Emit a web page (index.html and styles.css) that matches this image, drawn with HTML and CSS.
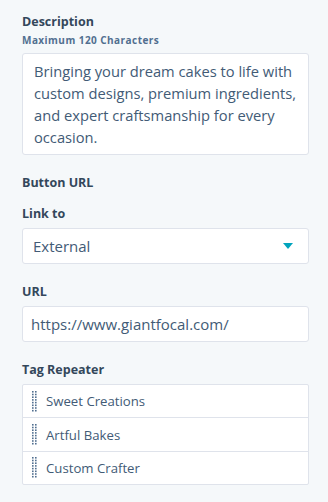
FILE: index.html
```html
<!DOCTYPE html>
<html>
<head>
<meta charset="utf-8">
<link rel="stylesheet" href="styles.css">
</head>
<body>
<div class="panel">
  <div class="field">
    <div class="label">Description</div>
    <div class="help">Maximum 120 Characters</div>
    <div class="textarea">Bringing your dream cakes to life with custom designs, premium ingredients, and expert craftsmanship for every occasion.</div>
  </div>
  <div class="group-title">Button URL</div>
  <div class="field link-field">
    <div class="label">Link to</div>
    <div class="input select">
      <span>External</span>
      <svg class="caret" width="10" height="6" viewBox="0 0 10 6"><path d="M0 0 H10 L5 6 Z" fill="#00a4bd"/></svg>
    </div>
  </div>
  <div class="field">
    <div class="label">URL</div>
    <div class="input">https://www.giantfocal.com/</div>
  </div>
  <div class="field">
    <div class="label">Tag Repeater</div>
    <div class="repeater">
      <div class="row"><svg class="handle" width="5" height="21" viewBox="0 0 5 21"><g fill="#516f90"><rect x="0" y="0" width="1.6" height="1.6"/><rect x="3" y="0" width="1.6" height="1.6"/><rect x="0" y="2.7" width="1.6" height="1.6"/><rect x="3" y="2.7" width="1.6" height="1.6"/><rect x="0" y="5.4" width="1.6" height="1.6"/><rect x="3" y="5.4" width="1.6" height="1.6"/><rect x="0" y="8.1" width="1.6" height="1.6"/><rect x="3" y="8.1" width="1.6" height="1.6"/><rect x="0" y="10.8" width="1.6" height="1.6"/><rect x="3" y="10.8" width="1.6" height="1.6"/><rect x="0" y="13.5" width="1.6" height="1.6"/><rect x="3" y="13.5" width="1.6" height="1.6"/><rect x="0" y="16.2" width="1.6" height="1.6"/><rect x="3" y="16.2" width="1.6" height="1.6"/><rect x="0" y="18.9" width="1.6" height="1.6"/><rect x="3" y="18.9" width="1.6" height="1.6"/></g></svg><span>Sweet Creations</span></div>
      <div class="row"><svg class="handle" width="5" height="21" viewBox="0 0 5 21"><g fill="#516f90"><rect x="0" y="0" width="1.6" height="1.6"/><rect x="3" y="0" width="1.6" height="1.6"/><rect x="0" y="2.7" width="1.6" height="1.6"/><rect x="3" y="2.7" width="1.6" height="1.6"/><rect x="0" y="5.4" width="1.6" height="1.6"/><rect x="3" y="5.4" width="1.6" height="1.6"/><rect x="0" y="8.1" width="1.6" height="1.6"/><rect x="3" y="8.1" width="1.6" height="1.6"/><rect x="0" y="10.8" width="1.6" height="1.6"/><rect x="3" y="10.8" width="1.6" height="1.6"/><rect x="0" y="13.5" width="1.6" height="1.6"/><rect x="3" y="13.5" width="1.6" height="1.6"/><rect x="0" y="16.2" width="1.6" height="1.6"/><rect x="3" y="16.2" width="1.6" height="1.6"/><rect x="0" y="18.9" width="1.6" height="1.6"/><rect x="3" y="18.9" width="1.6" height="1.6"/></g></svg><span>Artful Bakes</span></div>
      <div class="row"><svg class="handle" width="5" height="21" viewBox="0 0 5 21"><g fill="#516f90"><rect x="0" y="0" width="1.6" height="1.6"/><rect x="3" y="0" width="1.6" height="1.6"/><rect x="0" y="2.7" width="1.6" height="1.6"/><rect x="3" y="2.7" width="1.6" height="1.6"/><rect x="0" y="5.4" width="1.6" height="1.6"/><rect x="3" y="5.4" width="1.6" height="1.6"/><rect x="0" y="8.1" width="1.6" height="1.6"/><rect x="3" y="8.1" width="1.6" height="1.6"/><rect x="0" y="10.8" width="1.6" height="1.6"/><rect x="3" y="10.8" width="1.6" height="1.6"/><rect x="0" y="13.5" width="1.6" height="1.6"/><rect x="3" y="13.5" width="1.6" height="1.6"/><rect x="0" y="16.2" width="1.6" height="1.6"/><rect x="3" y="16.2" width="1.6" height="1.6"/><rect x="0" y="18.9" width="1.6" height="1.6"/><rect x="3" y="18.9" width="1.6" height="1.6"/></g></svg><span>Custom Crafter</span></div>
    </div>
  </div>
</div>
</body>
</html>
```
FILE: styles.css
```css
html, body {
  margin: 0;
  padding: 0;
  background: #f5f8fa;
}
body {
  font-family: "Open Sans", "Liberation Sans", sans-serif;
  color: #33475b;
  width: 328px;
  height: 502px;
  overflow: hidden;
}
.panel {
  padding: 14px 19px 0 22px;
  display: flex;
  flex-direction: column;
}
.label, .group-title {
  font-size: 12.5px;
  font-weight: 700;
  line-height: 16px;
  color: #33475b;
}
.help {
  font-size: 10px;
  font-weight: 700;
  color: #516f90;
  line-height: 12px;
  letter-spacing: 0.45px;
  margin-top: 4px;
}
.field {
  display: flex;
  flex-direction: column;
}
.textarea {
  margin-top: 7px;
  background: #fff;
  border: 1px solid #dfe3eb;
  border-radius: 3px;
  padding: 6px 11px 6px 11px;
  font-size: 14.7px;
  line-height: 22px;
  color: #425b76;
}
.group-title {
  margin-top: 20px;
}
.field + .field {
  margin-top: 20px;
}
.group-title + .field {
  margin-top: 15px;
}
.field .label + .input, .field .label + .repeater {
  margin-top: 6px;
}
.input {
  background: #fff;
  border: 1px solid #dfe3eb;
  border-radius: 3px;
  height: 36px;
  box-sizing: border-box;
  padding: 0 8px;
  display: flex;
  align-items: center;
  font-size: 15px;
  color: #425b76;
}
.select {
  justify-content: space-between;
  padding: 0 15px 0 10px;
}
.repeater {
  background: #fff;
  border: 1px solid #dfe3eb;
  border-radius: 2px;
}
.row {
  height: 32.4px;
  display: flex;
  align-items: center;
  padding-left: 9px;
  font-size: 13.2px;
  color: #425b76;
}
.row + .row {
  border-top: 1px solid #dfe3eb;
}
.handle {
  flex: none;
  margin-right: 9px;
}
```
